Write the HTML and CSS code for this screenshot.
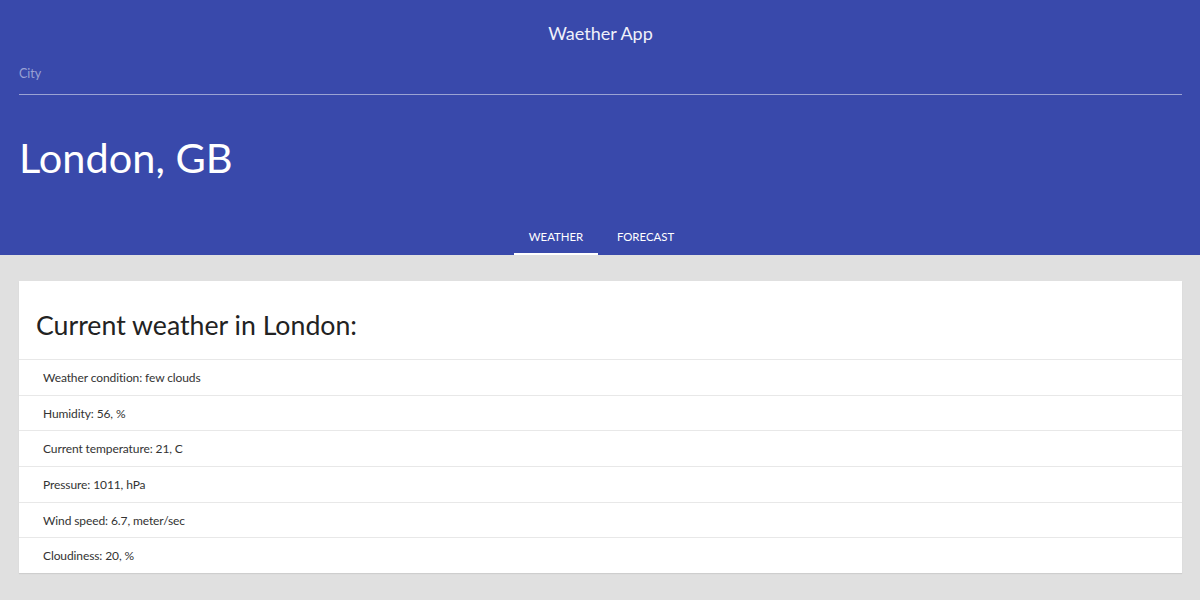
FILE: index.html
```html
<!DOCTYPE html>
<html>
<head>
<meta charset="utf-8">
<link rel="stylesheet" href="styles.css">
</head>
<body>
<header class="header">
  <div class="app-title">Waether App</div>
  <div class="field">
    <label class="field-label">City</label>
    <div class="field-line"></div>
  </div>
  <h1 class="city">London, GB</h1>
  <nav class="tabs">
    <div class="tab active">WEATHER</div>
    <div class="tab wide">FORECAST</div>
  </nav>
</header>
<main class="content">
  <section class="card">
    <h2 class="card-title">Current weather in London:</h2>
    <ul class="list">
      <li>Weather condition: few clouds</li>
      <li>Humidity: 56, %</li>
      <li>Current temperature: 21, C</li>
      <li>Pressure: 1011, hPa</li>
      <li>Wind speed: 6.7, meter/sec</li>
      <li>Cloudiness: 20, %</li>
    </ul>
  </section>
</main>
</body>
</html>
```
FILE: styles.css
```css
* { box-sizing: border-box; }
html, body { margin: 0; padding: 0; }
body {
  font-family: Lato, "Open Sans", sans-serif;
  background: #e0e0e0;
  height: 600px;
  overflow: hidden;
}
.header {
  background: #3949ab;
  color: #fff;
  padding: 0 18px 0 19px;
  height: 255px;
  display: flex;
  flex-direction: column;
}
.app-title {
  text-align: center;
  font-size: 18px;
  height: 66px;
  line-height: 66px;
  color: #f0f1fa;
}
.field { display: flex; flex-direction: column; }
.field-label {
  font-size: 12.5px;
  color: #9aa2d4;
  line-height: 16px;
  height: 28px;
}
.field-line {
  height: 1px;
  background: #9ba3d3;
}
.city {
  margin: 0;
  font-weight: 400;
  font-size: 41.5px;
  line-height: 54px;
  padding-top: 35px;
  height: 121px;
}
.tabs {
  display: flex;
  justify-content: center;
  margin-top: auto;
  padding-left: 6px;
}
.tab {
  font-size: 11.4px;
  color: #fff;
  width: 84px;
  text-align: center;
  height: 34px;
  line-height: 31px;
}
.tab.wide { width: 95px; }
.tab.active {
  border-bottom: 2px solid #fff;
}
.content { padding: 26px 18px 0 19px; }
.card {
  background: #fff;
  box-shadow: 0 1px 1px rgba(0,0,0,0.08);
}
.card-title {
  margin: 0;
  font-weight: 400;
  font-size: 26.7px;
  color: #222;
  padding: 24px 17px 0;
  height: 78px;
  line-height: 40px;
}
.list { list-style: none; margin: 0; padding: 0; }
.list li {
  border-top: 1px solid #e8e8e8;
  height: 35.7px;
  line-height: 35px;
  padding-left: 24px;
  font-size: 12px;
  letter-spacing: -0.1px;
  color: #333;
}
```
